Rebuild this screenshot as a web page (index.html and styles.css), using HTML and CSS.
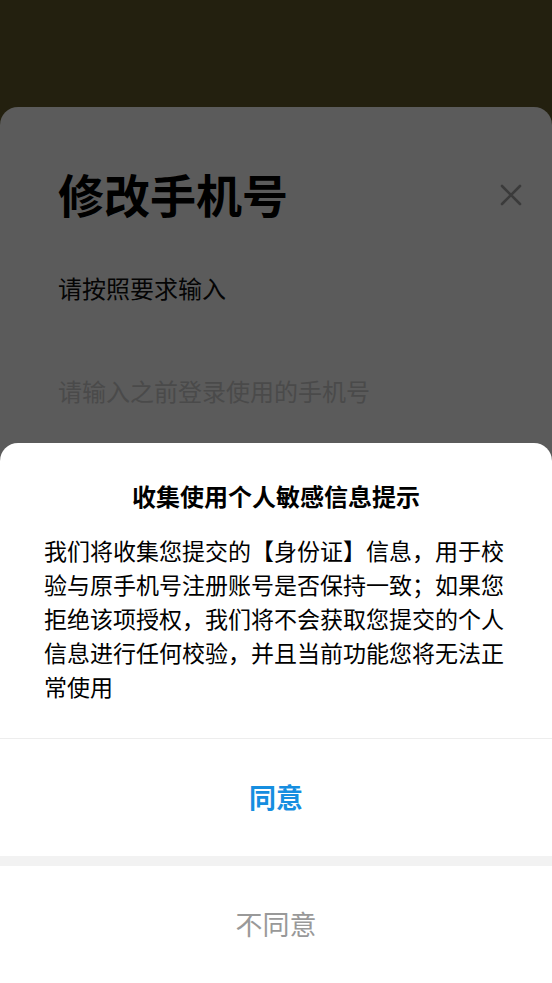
FILE: index.html
```html
<!DOCTYPE html>
<html lang="zh-CN">
<head>
<meta charset="utf-8">
<title>修改手机号</title>
<link rel="stylesheet" href="styles.css">
</head>
<body>
<div class="screen">
  <div class="topbar"></div>
  <section class="sheet">
    <div class="sheet-head">
      <h1 class="sheet-title">修改手机号</h1>
      <span class="close" aria-label="关闭">
        <svg width="22" height="22" viewBox="0 0 22 22"><path d="M2 2 L20 20 M20 2 L2 20" stroke="#3b3b3b" stroke-width="2.6" stroke-linecap="round"/></svg>
      </span>
    </div>
    <p class="sheet-sub">请按照要求输入</p>
    <p class="placeholder">请输入之前登录使用的手机号</p>
  </section>

  <div class="dialog">
    <div class="dialog-body">
      <h2 class="dialog-title">收集使用个人敏感信息提示</h2>
      <p class="dialog-text">我们将收集您提交的【身份证】信息，用于校验与原手机号注册账号是否保持一致；如果您拒绝该项授权，我们将不会获取您提交的个人信息进行任何校验，并且当前功能您将无法正常使用</p>
    </div>
    <button class="btn btn-agree">同意</button>
    <div class="gap"></div>
    <button class="btn btn-refuse">不同意</button>
  </div>
</div>
</body>
</html>
```

FILE: styles.css
```css
* { box-sizing: border-box; }
html, body {
  margin: 0;
  padding: 0;
}
body {
  font-family: "Noto Sans CJK SC", "Noto Sans", sans-serif;
  background: #23200f;
}
.screen {
  position: relative;
  width: 552px;
  height: 983px;
  overflow: hidden;
  display: flex;
  flex-direction: column;
}
.topbar {
  height: 107px;
  flex: none;
}
.sheet {
  flex: 1;
  background: #5b5b5b;
  border-radius: 18px 18px 0 0;
  padding: 54px 30px 0 58px;
}
.sheet-head {
  display: flex;
  align-items: center;
  justify-content: space-between;
  height: 64px;
}
.sheet-title {
  margin: 0;
  font-size: 46px;
  line-height: 64px;
  font-weight: 700;
  color: #000;
}
.close {
  display: flex;
  width: 22px;
  height: 22px;
  margin-top: 4px;
}
.sheet-sub {
  margin: 46px 0 0;
  font-size: 24px;
  line-height: 34px;
  color: #050505;
}
.placeholder {
  margin: 69px 0 0;
  font-size: 24px;
  line-height: 34px;
  color: #4a4a4a;
}
.dialog {
  position: absolute;
  left: 0;
  right: 0;
  bottom: 0;
  top: 443px;
  background: #fff;
  border-radius: 18px 18px 0 0;
  display: flex;
  flex-direction: column;
}
.dialog-body {
  padding: 36px 44px 35px;
  border-bottom: 1px solid #ededed;
}
.dialog-title {
  margin: 0;
  text-align: center;
  font-size: 24px;
  line-height: 34px;
  font-weight: 700;
  color: #000;
}
.dialog-text {
  margin: 20px 0 0;
  font-size: 23px;
  line-height: 34px;
  color: #000;
}
.btn {
  display: block;
  width: 100%;
  height: 117px;
  border: 0;
  background: #fff;
  font-family: inherit;
  padding: 0 0 2px;
  flex: none;
}
.btn-agree {
  font-size: 27px;
  font-weight: 700;
  color: #168ee0;
}
.gap {
  height: 10px;
  background: #f2f2f2;
  flex: none;
}
.btn-refuse {
  font-size: 27px;
  color: #999;
}
```
